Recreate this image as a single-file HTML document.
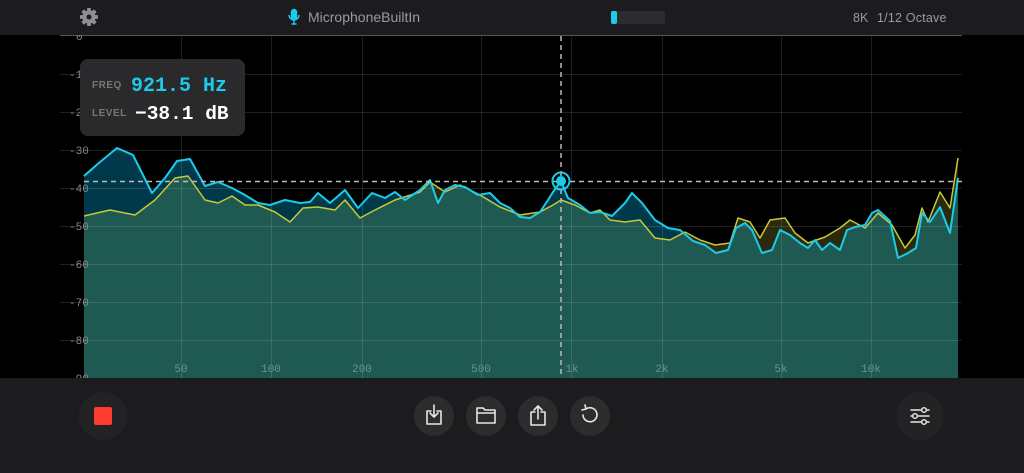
<!DOCTYPE html>
<html><head><meta charset="utf-8"><style>
html,body{margin:0;padding:0;width:1024px;height:473px;overflow:hidden;background:#000;font-family:"Liberation Sans",sans-serif}
</style></head><body>
<svg width="1024" height="473" viewBox="0 0 1024 473" xmlns="http://www.w3.org/2000/svg" style="position:absolute;left:0;top:0">
<defs>
<clipPath id="cb"><path d="M84,378 L84,176 L100,162 L117,148 L133,155 L152,193 L165,178 L177,161 L190,159 L205,186 L218,182 L232,188 L245,195 L258,203 L270,205 L285,200 L300,203 L310,202 L318,193 L330,203 L345,190 L358,208 L372,193 L385,198 L395,192 L405,200 L420,190 L430,180 L438,203 L445,190 L455,185 L465,187 L478,195 L490,193 L500,203 L510,208 L520,217 L530,218 L540,212 L548,200 L553,192 L561,181 L568,198 L580,205 L590,213 L600,212 L612,216 L625,203 L632,193 L642,203 L655,220 L668,228 L680,230 L693,241 L705,245 L716,253 L728,250 L736,228 L745,223 L752,230 L762,253 L772,250 L780,230 L790,235 L800,243 L808,248 L815,240 L822,250 L830,243 L840,250 L847,230 L855,227 L865,225 L872,213 L878,210 L890,221 L898,258 L908,253 L916,248 L922,213 L930,222 L940,207 L950,233 L958,178 L958,378 Z"/></clipPath>
</defs>
<rect x="0" y="36" width="1024" height="342" fill="#000"/>
<path d="M84,378 L84,176 L100,162 L117,148 L133,155 L152,193 L165,178 L177,161 L190,159 L205,186 L218,182 L232,188 L245,195 L258,203 L270,205 L285,200 L300,203 L310,202 L318,193 L330,203 L345,190 L358,208 L372,193 L385,198 L395,192 L405,200 L420,190 L430,180 L438,203 L445,190 L455,185 L465,187 L478,195 L490,193 L500,203 L510,208 L520,217 L530,218 L540,212 L548,200 L553,192 L561,181 L568,198 L580,205 L590,213 L600,212 L612,216 L625,203 L632,193 L642,203 L655,220 L668,228 L680,230 L693,241 L705,245 L716,253 L728,250 L736,228 L745,223 L752,230 L762,253 L772,250 L780,230 L790,235 L800,243 L808,248 L815,240 L822,250 L830,243 L840,250 L847,230 L855,227 L865,225 L872,213 L878,210 L890,221 L898,258 L908,253 L916,248 L922,213 L930,222 L940,207 L950,233 L958,178 L958,378 Z" fill="#003a4a"/>
<path d="M84,378 L84,216 L110,210 L135,215 L155,200 L175,178 L188,176 L205,200 L218,203 L232,196 L245,205 L258,205 L275,212 L290,222 L303,208 L318,207 L335,210 L345,200 L360,218 L375,210 L395,200 L420,192 L430,182 L445,192 L460,185 L480,195 L500,207 L520,215 L540,212 L553,205 L561,200 L575,205 L590,213 L600,210 L610,220 L625,222 L640,220 L655,238 L670,240 L685,232 L700,240 L715,245 L730,243 L738,218 L750,222 L760,238 L770,220 L785,218 L795,233 L808,243 L825,237 L840,228 L850,220 L865,228 L878,213 L892,225 L905,248 L915,235 L922,208 L928,222 L940,192 L950,208 L958,158 L958,378 Z" fill="#2b2a0e"/>
<g clip-path="url(#cb)"><path d="M84,378 L84,216 L110,210 L135,215 L155,200 L175,178 L188,176 L205,200 L218,203 L232,196 L245,205 L258,205 L275,212 L290,222 L303,208 L318,207 L335,210 L345,200 L360,218 L375,210 L395,200 L420,192 L430,182 L445,192 L460,185 L480,195 L500,207 L520,215 L540,212 L553,205 L561,200 L575,205 L590,213 L600,210 L610,220 L625,222 L640,220 L655,238 L670,240 L685,232 L700,240 L715,245 L730,243 L738,218 L750,222 L760,238 L770,220 L785,218 L795,233 L808,243 L825,237 L840,228 L850,220 L865,228 L878,213 L892,225 L905,248 L915,235 L922,208 L928,222 L940,192 L950,208 L958,158 L958,378 Z" fill="#1e5a51"/></g>
<g stroke="#ffffff" stroke-opacity="0.12" stroke-width="1">
<line x1="60" y1="74.5" x2="962" y2="74.5"/><line x1="60" y1="112.5" x2="962" y2="112.5"/><line x1="60" y1="150.5" x2="962" y2="150.5"/><line x1="60" y1="188.5" x2="962" y2="188.5"/><line x1="60" y1="226.5" x2="962" y2="226.5"/><line x1="60" y1="264.5" x2="962" y2="264.5"/><line x1="60" y1="302.5" x2="962" y2="302.5"/><line x1="60" y1="340.5" x2="962" y2="340.5"/>
<line x1="181.5" y1="36" x2="181.5" y2="378"/><line x1="271.5" y1="36" x2="271.5" y2="378"/><line x1="362.5" y1="36" x2="362.5" y2="378"/><line x1="481.5" y1="36" x2="481.5" y2="378"/><line x1="571.5" y1="36" x2="571.5" y2="378"/><line x1="662.5" y1="36" x2="662.5" y2="378"/><line x1="781.5" y1="36" x2="781.5" y2="378"/><line x1="871.5" y1="36" x2="871.5" y2="378"/>
</g>
<line x1="60" y1="35.5" x2="962" y2="35.5" stroke="#555" stroke-width="1"/>
<polyline fill="none" stroke="#c8c83a" stroke-width="1.5" stroke-linejoin="round" points="84,216 110,210 135,215 155,200 175,178 188,176 205,200 218,203 232,196 245,205 258,205 275,212 290,222 303,208 318,207 335,210 345,200 360,218 375,210 395,200 420,192 430,182 445,192 460,185 480,195 500,207 520,215 540,212 553,205 561,200 575,205 590,213 600,210 610,220 625,222 640,220 655,238 670,240 685,232 700,240 715,245 730,243 738,218 750,222 760,238 770,220 785,218 795,233 808,243 825,237 840,228 850,220 865,228 878,213 892,225 905,248 915,235 922,208 928,222 940,192 950,208 958,158"/>
<polyline fill="none" stroke="#1ccbea" stroke-width="2" stroke-linejoin="round" points="84,176 100,162 117,148 133,155 152,193 165,178 177,161 190,159 205,186 218,182 232,188 245,195 258,203 270,205 285,200 300,203 310,202 318,193 330,203 345,190 358,208 372,193 385,198 395,192 405,200 420,190 430,180 438,203 445,190 455,185 465,187 478,195 490,193 500,203 510,208 520,217 530,218 540,212 548,200 553,192 561,181 568,198 580,205 590,213 600,212 612,216 625,203 632,193 642,203 655,220 668,228 680,230 693,241 705,245 716,253 728,250 736,228 745,223 752,230 762,253 772,250 780,230 790,235 800,243 808,248 815,240 822,250 830,243 840,250 847,230 855,227 865,225 872,213 878,210 890,221 898,258 908,253 916,248 922,213 930,222 940,207 950,233 958,178"/>
<line x1="84" y1="181.5" x2="962" y2="181.5" stroke="#bbb" stroke-width="1.5" stroke-dasharray="5,4"/>
<line x1="561" y1="36" x2="561" y2="378" stroke="#bbb" stroke-width="1.5" stroke-dasharray="5,4"/>
<circle cx="561" cy="181" r="8.5" fill="none" stroke="#1ccbea" stroke-width="2"/>
<circle cx="561" cy="181" r="5" fill="#1ccbea"/>
<g font-family="Liberation Mono, monospace" font-size="11" fill="#888">
<text x="76" y="40">0</text><text x="69" y="78">-10</text><text x="69" y="116">-20</text><text x="69" y="154">-30</text><text x="69" y="192">-40</text><text x="69" y="230">-50</text><text x="69" y="268">-60</text><text x="69" y="306">-70</text><text x="69" y="344">-80</text><text x="69" y="382">-90</text>
</g>
<g font-family="Liberation Mono, monospace" font-size="11" fill="#6a948b" text-anchor="middle">
<text x="181" y="372">50</text><text x="271" y="372">100</text><text x="362" y="372">200</text><text x="481" y="372">500</text><text x="572" y="372">1k</text><text x="662" y="372">2k</text><text x="781" y="372">5k</text><text x="871" y="372">10k</text>
</g>
<rect x="0" y="0" width="1024" height="35" fill="#1c1c1e"/>
<g transform="translate(89,17)" fill="#8e8e93">
<circle r="6.5"/>
<g><rect x="-2" y="-9" width="4" height="18" rx="1"/><rect x="-2" y="-9" width="4" height="18" rx="1" transform="rotate(45)"/><rect x="-2" y="-9" width="4" height="18" rx="1" transform="rotate(90)"/><rect x="-2" y="-9" width="4" height="18" rx="1" transform="rotate(135)"/></g>
<circle r="2.5" fill="#1c1c1e"/>
</g>
<g fill="none" stroke="#1ccbea" stroke-width="1.4">
<rect x="291.5" y="9.5" width="5" height="10" rx="2.5" fill="#1ccbea"/>
<path d="M289,15 a5,5 0 0 0 10,0 M294,20 v4 M291.5,24 h5"/>
</g>
<text x="308" y="22" font-size="14" fill="#9a9a9f">MicrophoneBuiltIn</text>
<rect x="611" y="11" width="54" height="13" rx="2" fill="#2c2c2e"/>
<rect x="611" y="11" width="6" height="13" rx="2" fill="#1ccbea"/>
<text x="853" y="22" font-size="12.5" fill="#9a9a9f">8K</text>
<text x="877" y="22" font-size="12.5" fill="#9a9a9f" letter-spacing="0.2">1/12 Octave</text>
<rect x="80" y="59" width="165" height="77" rx="8" fill="#2a2a2c"/>
<text x="92" y="88" font-size="10" font-weight="bold" fill="#777" letter-spacing="0.5">FREQ</text>
<text x="131" y="91" font-family="Liberation Mono, monospace" font-size="20" font-weight="bold" fill="#1ccbea">921.5 Hz</text>
<text x="92" y="116" font-size="10" font-weight="bold" fill="#777" letter-spacing="0.5">LEVEL</text>
<text x="135" y="119" font-family="Liberation Mono, monospace" font-size="19.5" font-weight="bold" fill="#fff">−38.1 dB</text>
<rect x="0" y="378" width="1024" height="95" fill="#1c1c1e"/>
<circle cx="103" cy="416" r="24" fill="#232325"/>
<rect x="94" y="407" width="18" height="18" rx="2" fill="#ff3b30"/>
<circle cx="434" cy="416" r="20" fill="#2c2c2e"/>
<circle cx="486" cy="416" r="20" fill="#2c2c2e"/>
<circle cx="538" cy="416" r="20" fill="#2c2c2e"/>
<circle cx="590" cy="416" r="20" fill="#2c2c2e"/>
<circle cx="920" cy="416" r="24" fill="#232325"/>
<g fill="none" stroke="#e5e5e5" stroke-width="1.6" stroke-linecap="round" stroke-linejoin="round">
<path d="M431,411 h-4 v13 h14 v-13 h-4 M434,405 v12 M430,413 l4,4 l4,-4"/>
<path d="M477,411 v12 h18 v-13 h-10 l-2,-2 h-6 z M477,413 h18"/>
<path d="M535,412 h-4 v13 h14 v-13 h-4 M538,419 v-13 M534,410 l4,-4 l4,4"/>
<path d="M586,409 a7,7 0 1 1 -3,6 M586,409 l-1,-4 M586,409 l-4,1"/>
<path d="M911,410 h18 M911,416 h18 M911,422 h18"/>
</g>
<g fill="#1c1c1e" stroke="#e5e5e5" stroke-width="1.5">
<circle cx="924" cy="410" r="2.3"/><circle cx="915" cy="416" r="2.3"/><circle cx="924" cy="422" r="2.3"/>
</g>
</svg>
</body></html>
